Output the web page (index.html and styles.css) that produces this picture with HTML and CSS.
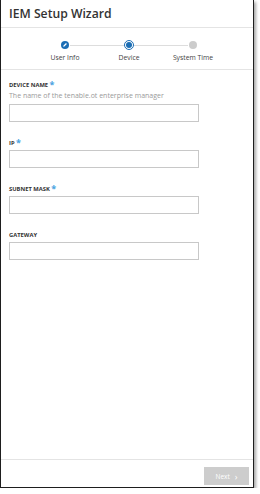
FILE: index.html
```html
<!DOCTYPE html>
<html>
<head>
<meta charset="utf-8">
<link rel="stylesheet" href="styles.css">
</head>
<body>
<div class="frame">
  <header class="header"><h1 class="title">IEM Setup Wizard</h1></header>
  <nav class="steps">
    <div class="step done">
      <span class="dot"><svg viewBox="0 0 8 8" width="8" height="8"><path d="M2.2 5.8 L2.5 4.6 L5 2.1 L5.9 3 L3.4 5.5 Z" fill="#fff"/></svg></span>
      <span class="step-label">User Info</span>
    </div>
    <div class="step current">
      <span class="dot"></span>
      <span class="step-label">Device</span>
    </div>
    <div class="step todo">
      <span class="dot"></span>
      <span class="step-label">System Time</span>
    </div>
  </nav>
  <main class="form">
    <div class="field first">
      <label class="label">DEVICE NAME <span class="req">*</span></label>
      <div class="hint">The name of the tenable.ot enterprise manager</div>
      <div class="input"></div>
    </div>
    <div class="field">
      <label class="label">IP <span class="req">*</span></label>
      <div class="input"></div>
    </div>
    <div class="field">
      <label class="label">SUBNET MASK <span class="req">*</span></label>
      <div class="input"></div>
    </div>
    <div class="field">
      <label class="label">GATEWAY</label>
      <div class="input"></div>
    </div>
  </main>
  <footer class="footer">
    <button class="next">Next <span class="chev">&#8250;</span></button>
  </footer>
</div>
</body>
</html>
```
FILE: styles.css
```css
html, body { margin: 0; padding: 0; background: #fff; }
body { font-family: "Open Sans", "Liberation Sans", sans-serif; color: #333; }
.frame {
  width: 252px; height: 487px;
  border: 1px solid #1e1e1e; border-top: none;
  box-shadow: 2px 2px 3px rgba(0,0,0,0.35);
  display: flex; flex-direction: column; background: #fff;
}
.header { height: 27px; border-bottom: 1px solid #e4e4e4; display: flex; align-items: center; padding-left: 8px; }
.title { margin: 0; font-size: 12.2px; font-weight: 600; color: #333; letter-spacing: 0; }
.steps { height: 41px; border-bottom: 1px solid #e4e4e4; display: flex; padding-left: 32px; }
.step { width: 64px; position: relative; display: flex; flex-direction: column; align-items: center; padding-top: 13px; }
.step:not(:last-child)::after { content: ""; position: absolute; top: 17px; left: 37px; width: 54px; height: 1px; background: #ddd; }
.dot { width: 8px; height: 8px; border-radius: 50%; box-sizing: border-box; display: flex; }
.done .dot { background: #1b6db4; }
.current .dot { width: 10px; height: 10px; margin-top: -1px; margin-bottom: -1px; border: 1px solid #1b6db4; background: #fff; align-items: center; justify-content: center; }
.current .dot::before { content: ""; width: 6px; height: 6px; border-radius: 50%; background: #1b6db4; }
.todo .dot { background: #ccc; }
.step-label { font-size: 6.8px; color: #444; margin-top: 4px; white-space: nowrap; }
.form { flex: 1; padding: 0 54px 0 8px; }
.field { margin-top: 18px; }
.field.first { margin-top: 12px; }
.label { display: block; font-size: 5.8px; font-weight: 700; color: #333; line-height: 7px; }
.req { color: #4aa3df; font-size: 9px; position: relative; top: 1px; line-height: 0; }
.hint { font-size: 7px; color: #9a9a9a; margin-top: 2px; line-height: 10px; }
.input { margin-top: 3px; height: 16px; border: 1px solid #c8c8c8; }
.footer { height: 28px; border-top: 1px solid #e4e4e4; display: flex; justify-content: flex-end; align-items: flex-start; padding: 7px 4px 0 0; box-sizing: border-box; }
.next { width: 45px; height: 18px; border: none; background: #cdcdcd; color: #fff; font-family: inherit; font-size: 6.5px; padding: 0; display: flex; align-items: center; justify-content: center; gap: 5px; }
.chev { font-size: 9px; line-height: 1; }
```
